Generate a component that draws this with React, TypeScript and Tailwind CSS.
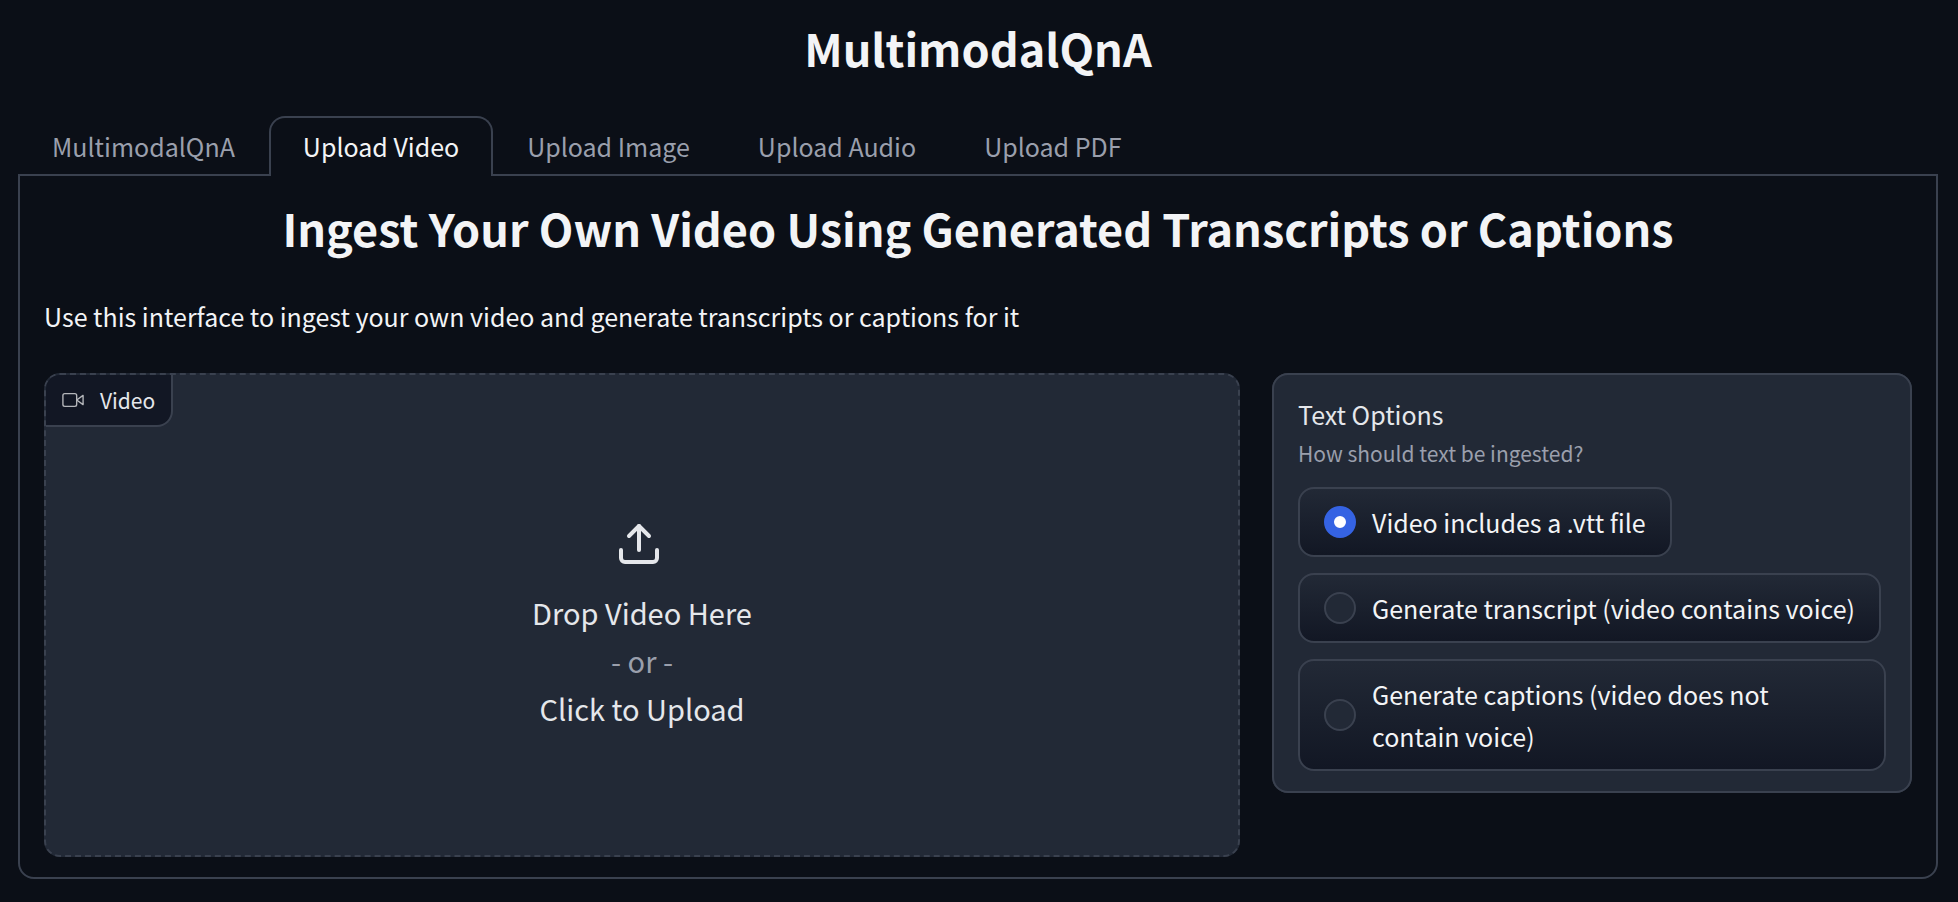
import { useState } from "react";

const tabs = ["MultimodalQnA", "Upload Video", "Upload Image", "Upload Audio", "Upload PDF"];

const options = [
  "Video includes a .vtt file",
  "Generate transcript (video contains voice)",
  "Generate captions (video does not contain voice)",
];

function VideoIcon() {
  return (
    <svg className="size-[22px] shrink-0" viewBox="0 0 24 24" fill="none" stroke="currentColor" strokeWidth="1.5" strokeLinecap="round" strokeLinejoin="round" aria-hidden="true">
      <polygon points="23 7 16 12 23 17 23 7" />
      <rect x="1" y="5" width="15" height="14" rx="2" ry="2" />
    </svg>
  );
}

function UploadIcon() {
  return (
    <svg className="mt-[22px] mr-1.5 mb-5 size-12" viewBox="0 0 24 24" fill="none" stroke="currentColor" strokeWidth="2" strokeLinecap="round" strokeLinejoin="round" aria-hidden="true">
      <path d="M21 15v4a2 2 0 0 1-2 2H5a2 2 0 0 1-2-2v-4" />
      <polyline points="17 8 12 3 7 8" />
      <line x1="12" y1="3" x2="12" y2="15" />
    </svg>
  );
}

function DropZone() {
  return (
    <div className="relative flex min-h-[484px] min-w-0 flex-1 overflow-hidden rounded-2xl border-2 border-dashed border-[#3a414f] bg-[#222936]">
      <div className="absolute top-0 left-0 flex h-[52px] items-center gap-4 rounded-br-2xl border-r-2 border-b-2 border-[#3a414f] bg-[#121724] px-4 text-[21px] leading-9 text-[#e5e7eb]">
        <span className="text-[#b4b6ba]">
          <VideoIcon />
        </span>
        Video
      </div>
      <button type="button" className="flex flex-1 cursor-pointer flex-col items-center justify-center text-[29px] leading-[48px] text-[#e5e7eb]">
        <UploadIcon />
        <span>Drop Video Here</span>
        <span className="text-[#9a9fac]">- or -</span>
        <span>Click to Upload</span>
      </button>
    </div>
  );
}

function TextOptions() {
  const [selected, setSelected] = useState(0);
  return (
    <fieldset className="w-[640px] max-w-full min-w-0 rounded-2xl border-2 border-[#3a414f] bg-[#222936] px-6 pt-[18px] pb-5">
      <div id="text-options" className="text-[25px] leading-[42px] text-[#e5e7eb]">Text Options</div>
      <p className="mb-4 text-[21px] leading-9 text-[#9a9fac]">How should text be ingested?</p>
      <div role="radiogroup" aria-labelledby="text-options" className="flex flex-col items-start gap-4">
        {options.map((option, i) => (
          <label key={option} className="flex cursor-pointer items-center gap-4 rounded-2xl border-2 border-[#3a414f] bg-linear-to-b from-[#222936] to-[#121724] px-6 py-3 text-[25px] leading-[42px] text-[#f3f4f6]">
            <input
              type="radio"
              name="text-option"
              checked={selected === i}
              onChange={() => setSelected(i)}
              className="size-8 shrink-0 appearance-none rounded-full border-2 border-[#3a414f] bg-[#222936] checked:border-[10px] checked:border-[#3563e3] checked:bg-white"
            />
            <span>{option}</span>
          </label>
        ))}
      </div>
    </fieldset>
  );
}

export default function App() {
  const [active, setActive] = useState(1);
  return (
    <main className="min-h-screen bg-[#0b0f17] pt-4 pr-5 pb-6 pl-[18px] font-['Noto_Sans_CJK_SC',sans-serif] text-[#f3f4f6]">
      <h1 className="mb-9 text-center text-[45px] leading-[64px] font-bold">MultimodalQnA</h1>
      <div role="tablist" className="flex">
        {tabs.map((tab, i) => (
          <button
            key={tab}
            type="button"
            role="tab"
            aria-selected={active === i}
            onClick={() => setActive(i)}
            className={
              active === i
                ? "relative -mb-0.5 h-[60px] rounded-t-2xl border-2 border-b-0 border-[#3a414f] bg-[#0b0f17] px-8 pb-0.5 text-[25px] leading-[42px] text-[#f3f4f6]"
                : "-mb-0.5 h-[60px] cursor-pointer border-2 border-b-0 border-transparent px-8 pb-0.5 text-[25px] leading-[42px] text-[#9a9fac]"
            }
          >
            {tab}
          </button>
        ))}
      </div>
      <section role="tabpanel" className="rounded-b-2xl border-2 border-[#3a414f] px-6 py-5">
        <h2 className="mb-[35px] text-center text-[45px] leading-[64px] font-bold">
          Ingest Your Own Video Using Generated Transcripts or Captions
        </h2>
        <p className="mb-9 text-[25px] leading-[42px]">
          Use this interface to ingest your own video and generate transcripts or captions for it
        </p>
        <div className="flex items-start gap-8">
          <DropZone />
          <TextOptions />
        </div>
      </section>
    </main>
  );
}
